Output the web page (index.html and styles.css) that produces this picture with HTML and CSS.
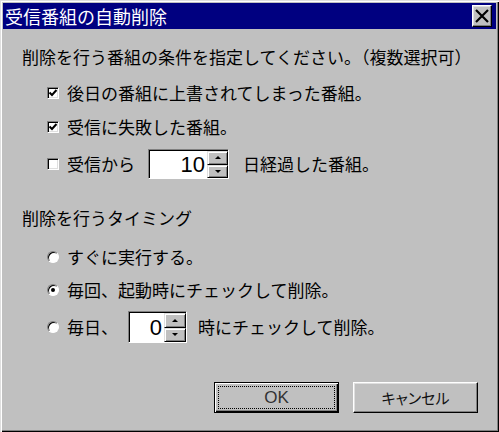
FILE: index.html
```html
<!DOCTYPE html>
<html lang="ja">
<head>
<meta charset="utf-8">
<title>受信番組の自動削除</title>
<link rel="stylesheet" href="styles.css">
</head>
<body>
<div class="win">
  <div class="titlebar">
    <span class="title">受信番組の自動削除</span>
    <span class="close">
      <svg width="14" height="14" viewBox="0 0 14 14"><path d="M1 1 L13 13 M13 1 L1 13" stroke="#000" stroke-width="2.2" fill="none"/></svg>
    </span>
  </div>
  <div class="content">
    <div class="line">削除を行う番組の条件を指定してください。（複数選択可）</div>
    <div class="group checks">
      <div class="opt">
        <span class="check"><svg width="10" height="10" viewBox="0 0 10 10"><path d="M1.5 4.5 L4 7 L8.5 2" stroke="#000" stroke-width="2" fill="none"/></svg></span>
        <span class="label">後日の番組に上書されてしまった番組。</span>
      </div>
      <div class="opt">
        <span class="check"><svg width="10" height="10" viewBox="0 0 10 10"><path d="M1.5 4.5 L4 7 L8.5 2" stroke="#000" stroke-width="2" fill="none"/></svg></span>
        <span class="label">受信に失敗した番組。</span>
      </div>
      <div class="opt tall">
        <span class="check"></span>
        <span class="label">受信から</span>
        <span class="spin spin-days">
          <span class="field">10</span>
          <span class="arrows"><span class="arr"><i class="up"></i></span><span class="arr"><i class="down"></i></span></span>
        </span>
        <span class="label after-days">日経過した番組。</span>
      </div>
    </div>
    <div class="line heading">削除を行うタイミング</div>
    <div class="group radios">
      <div class="opt">
        <span class="radio"></span>
        <span class="label">すぐに実行する。</span>
      </div>
      <div class="opt">
        <span class="radio on"></span>
        <span class="label">毎回、起動時にチェックして削除。</span>
      </div>
      <div class="opt taller">
        <span class="radio"></span>
        <span class="label">毎日、</span>
        <span class="spin spin-hour">
          <span class="field">0</span>
          <span class="arrows"><span class="arr"><i class="up"></i></span><span class="arr"><i class="down"></i></span></span>
        </span>
        <span class="label after-hour">時にチェックして削除。</span>
      </div>
    </div>
    <div class="buttons">
      <span class="btn default">OK</span>
      <span class="btn">キャンセル</span>
    </div>
  </div>
</div>
</body>
</html>
```

FILE: styles.css
```css
* { box-sizing: border-box; }
html, body { margin: 0; padding: 0; }
body {
  width: 499px;
  height: 432px;
  overflow: hidden;
  background: #c0c0c0;
  font-family: "Noto Sans CJK JP", "Liberation Sans", sans-serif;
}
.win {
  width: 499px;
  height: 432px;
  padding: 3px;
  background: #c0c0c0;
  display: flex;
  flex-direction: column;
  box-shadow: inset 1px 1px 0 #dfdfdf, inset 2px 2px 0 #ffffff,
              inset -1px -1px 0 #000000, inset -2px -2px 0 #808080;
}
.titlebar {
  height: 26px;
  background: #000080;
  display: flex;
  align-items: center;
  justify-content: space-between;
  padding: 0 4px 0 2px;
}
.title {
  color: #ffffff;
  font-size: 18px;
  line-height: 26px;
  white-space: nowrap;
}
.close {
  width: 20px;
  height: 22px;
  background: #c0c0c0;
  border: 1px solid;
  border-color: #ffffff #000000 #000000 #ffffff;
  box-shadow: inset -1px -1px 0 #808080, inset 1px 1px 0 #dfdfdf;
  display: flex;
  align-items: center;
  justify-content: center;
}
.content {
  flex: 1;
  display: flex;
  flex-direction: column;
  padding: 16px 18px 16px 19px;
  font-size: 17px;
  color: #000;
}
.line {
  height: 24px;
  line-height: 24px;
  white-space: nowrap;
}
.heading { margin-top: 27px; }
.group {
  display: flex;
  flex-direction: column;
  padding-left: 25px;
}
.checks { margin-top: 12px; gap: 10px; }
.radios { margin-top: 15px; gap: 9px; }
.opt {
  display: flex;
  align-items: center;
  height: 24px;
  white-space: nowrap;
}
.opt.tall { height: 30px; }
.opt.taller { height: 32px; }
.label { line-height: 24px; }
.check {
  width: 12px;
  height: 12px;
  margin-right: 8px;
  background: #ffffff;
  border: 1px solid;
  border-color: #808080 #ffffff #ffffff #808080;
  box-shadow: inset 1px 1px 0 #000000, inset -1px -1px 0 #dfdfdf;
  display: flex;
  align-items: center;
  justify-content: center;
  flex: none;
}
.radio {
  width: 12px;
  height: 12px;
  margin-right: 8px;
  border-radius: 50%;
  background: #ffffff;
  border: 1px solid;
  border-color: #808080 #ffffff #ffffff #808080;
  box-shadow: inset 1px 1px 0 #000000;
  display: flex;
  align-items: center;
  justify-content: center;
  flex: none;
}
.radio.on::after {
  content: "";
  width: 4px;
  height: 4px;
  border-radius: 50%;
  background: #000;
}
.spin {
  display: flex;
  height: 100%;
  border: 1px solid;
  border-color: #808080 #ffffff #ffffff #808080;
  box-shadow: inset 1px 1px 0 #000000;
  background: #ffffff;
  padding: 1px 0 0 1px;
}
.spin-days { width: 81px; margin-left: 13px; }
.spin-hour { width: 59px; margin-left: 10px; }
.after-days { margin-left: 14px; }
.after-hour { margin-left: 11px; }
.field {
  flex: 1;
  text-align: right;
  font-family: "Liberation Sans", sans-serif;
  font-size: 22px;
  padding-right: 2px;
  display: flex;
  align-items: center;
  justify-content: flex-end;
}
.arrows {
  display: flex;
  flex-direction: column;
}
.spin-days .arrows { width: 21px; }
.spin-hour .arrows { width: 22px; }
.arr {
  flex: 1;
  background: #c0c0c0;
  border: 1px solid;
  border-color: #dfdfdf #000000 #000000 #dfdfdf;
  box-shadow: inset 1px 1px 0 #ffffff, inset -1px -1px 0 #808080;
  display: flex;
  align-items: center;
  justify-content: center;
}
.up, .down {
  width: 0;
  height: 0;
  border-left: 3px solid transparent;
  border-right: 3px solid transparent;
}
.up { border-bottom: 3px solid #000; }
.down { border-top: 3px solid #000; }
.buttons {
  margin-top: auto;
  display: flex;
  justify-content: flex-end;
  gap: 14px;
}
.btn {
  width: 125px;
  height: 31px;
  background: #c0c0c0;
  border: 1px solid;
  border-color: #ffffff #000000 #000000 #ffffff;
  box-shadow: inset -1px -1px 0 #808080, inset 1px 1px 0 #dfdfdf;
  display: flex;
  align-items: center;
  justify-content: center;
  font-size: 15px;
  font-feature-settings: "palt";
  color: #111;
}
.btn.default {
  border: 1px solid #000000;
  box-shadow: inset 1px 1px 0 #ffffff, inset -1px -1px 0 #000000, inset -2px -2px 0 #808080;
  outline: 1px dotted #000;
  outline-offset: -5px;
  font-family: "Liberation Sans", sans-serif;
  font-size: 17px;
  color: #333;
}
```
